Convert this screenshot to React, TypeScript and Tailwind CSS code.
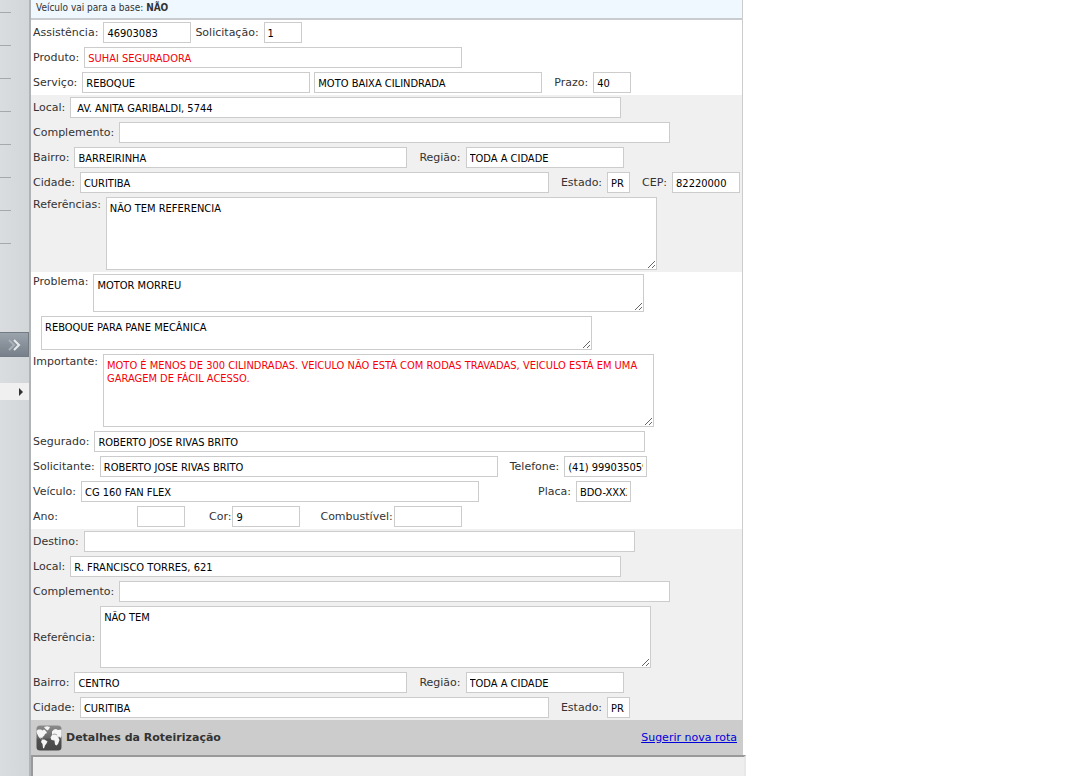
import { useId } from "react";
import type { ReactNode } from "react";
import clsx from "clsx";

const fieldStyle =
  "shrink-0 border border-[#cccccc] bg-white px-[3px] font-['DejaVu_Sans_Condensed','DejaVu_Sans',sans-serif] text-[11px] leading-[13px] outline-none focus:border-[#888888]";

type FieldProps = {
  label: string;
  value?: string;
  width: string;
  red?: boolean;
  className?: string;
  labelClass?: string;
};

const Field = ({ label, value = "", width, red, className = "gap-[5px]", labelClass }: FieldProps) => {
  const id = useId();
  return (
    <div className={clsx("flex items-center", className)}>
      <label htmlFor={id} className={clsx("shrink-0 pt-px", labelClass)}>{label}</label>
      <input
        id={id}
        type="text"
        defaultValue={value}
        className={clsx(fieldStyle, "h-[21px] pt-0.5", width, red ? "text-[#f50008]" : "text-black")}
      />
    </div>
  );
};

type AreaProps = {
  label?: string;
  name?: string;
  value: string;
  height: string;
  red?: boolean;
  center?: boolean;
};

const Area = ({ label, name, value, height, red, center }: AreaProps) => {
  const id = useId();
  return (
    <div className={clsx("flex gap-[5px] py-0.5", center ? "items-center" : "items-start", label ? "px-0.5" : "px-2.5")}>
      {label && <label htmlFor={id} className="shrink-0 pt-px">{label}</label>}
      <textarea
        id={id}
        aria-label={label ? undefined : name}
        defaultValue={value}
        className={clsx(fieldStyle, "block w-[551px] py-1", height, red ? "text-[#f50008]" : "text-black")}
      />
    </div>
  );
};

const Row = ({ children, className = "gap-3" }: { children: ReactNode; className?: string }) => (
  <div className={clsx("flex items-center px-0.5 py-0.5", className)}>{children}</div>
);

const GlobeIcon = () => (
  <svg width="26" height="26" viewBox="0 0 26 26" aria-hidden="true">
    <defs>
      <linearGradient id="globe" x1="0" y1="0" x2="0" y2="1">
        <stop offset="0" stopColor="#8c8c8c" />
        <stop offset="0.5" stopColor="#666666" />
        <stop offset="0.55" stopColor="#505050" />
        <stop offset="1" stopColor="#484848" />
      </linearGradient>
    </defs>
    <rect x="0.5" y="0.5" width="25" height="25" rx="3.5" fill="url(#globe)" />
    <g fill="#f4f4f4">
      <path d="M0.5 6 L2 4.5 L5 4.5 L6.5 5.5 L8 4.5 L10 6 L11 8 L9 9 L8 11 L6.5 12 L6.5 13.5 L5 12.5 L4 13 L6 14.5 L4.5 14 L2.5 11.5 L1 8.5Z" />
      <path d="M8 2 L11 1.2 L14 2 L13 4 L11.5 5.5 L9.5 4Z" />
      <path d="M6 14.5 L8.5 14.5 L11.5 16.5 L10.5 18.5 L9 20.5 L8 23.5 L7 23 L6.5 19 L5 17Z" />
      <path d="M16 8.5 L16 6.5 L18 4.5 L20 4 L22 5 L25.5 4.5 L25.5 11 L24.5 13 L23.5 11.5 L22.5 13 L23.5 15 L22 19 L20.5 20.5 L19 19.5 L18.5 15.5 L15.5 15 L14.5 12.5 L16 10Z" />
    </g>
    <path d="M16.5 9.5 L19 9 L21 10 M22 11.5 L23 13" fill="none" stroke="#8a8a8a" strokeWidth="0.8" />
  </svg>
);

const Sidebar = () => (
  <aside className="w-[31px] shrink-0 border-r-2 border-[#b1b4b7] bg-linear-to-r from-[#d9dddf] to-[#d2d6d9]">
    <div className="h-[13px] w-[11px] border-b border-[#a6a9ab]" />
    {[1, 2, 3, 4, 5, 6, 7].map((n) => (
      <div key={n} className="h-[33px] w-[11px] border-b border-[#a6a9ab]" />
    ))}
    <button
      type="button"
      aria-label="Expandir menu"
      className="mt-[88px] flex h-[25px] w-full items-center justify-end border border-l-0 border-[#737b84] bg-linear-to-b from-[#9ba3ab] to-[#77808a] pr-[7px]"
    >
      <svg width="14" height="12" viewBox="0 0 14 12" fill="none" strokeWidth="2">
        <path d="M2 1 L7 6 L2 11" stroke="#a9b0b7" />
        <path d="M7 1 L12 6 L7 11" stroke="#e8ebed" />
      </svg>
    </button>
    <button
      type="button"
      aria-label="Abrir"
      className="mt-[26px] flex h-[17px] w-full items-center justify-end bg-[#f0f0f0] pr-1.5"
    >
      <svg width="4" height="8" viewBox="0 0 4 8">
        <path d="M0 0 L4 4 L0 8Z" fill="#333333" />
      </svg>
    </button>
  </aside>
);

export default function App() {
  return (
    <div className="flex min-h-screen overflow-x-hidden bg-white font-['DejaVu_Sans',sans-serif] text-[11px] leading-[14px] text-[#333333]">
      <Sidebar />
      <main className="flex max-w-[712px] flex-1 flex-col border-r border-[#cccccc]">
        <div className="h-5 border-b-2 border-[#c8ccd0] bg-[#eff7ff] px-[5px] pt-px font-['DejaVu_Sans_Condensed','DejaVu_Sans',sans-serif] text-[10px]">
          Veículo vai para a base: <b>NÃO</b>
        </div>

        <section>
          <Row className="gap-1">
            <Field label="Assistência:" value="46903083" width="w-[88px]" />
            <Field label="Solicitação:" value="1" width="w-[38px]" />
          </Row>
          <Row>
            <Field label="Produto:" value="SUHAI SEGURADORA" width="w-[378px]" red />
          </Row>
          <Row>
            <div className="flex gap-1">
              <Field label="Serviço:" value="REBOQUE" width="w-[228px]" />
              <input
                type="text"
                aria-label="Tipo de serviço"
                defaultValue="MOTO BAIXA CILINDRADA"
                className={clsx(fieldStyle, "h-[21px] w-[228px] pt-0.5 text-black")}
              />
            </div>
            <Field label="Prazo:" value="40" width="w-[38px]" />
          </Row>
        </section>

        <section className="bg-[#f0f0f0]">
          <Row>
            <Field label="Local:" value=" AV. ANITA GARIBALDI, 5744" width="w-[551px]" />
          </Row>
          <Row>
            <Field label="Complemento:" width="w-[551px]" />
          </Row>
          <Row>
            <Field label="Bairro:" value="BARREIRINHA" width="w-[333px]" />
            <Field label="Região:" value="TODA A CIDADE" width="w-[158px]" />
          </Row>
          <Row>
            <Field label="Cidade:" value="CURITIBA" width="w-[469px]" />
            <Field label="Estado:" value="PR" width="w-[23px]" />
            <Field label="CEP:" value="82220000" width="w-[68px]" />
          </Row>
          <Area label="Referências:" value="NÃO TEM REFERENCIA" height="h-[73px]" />
        </section>

        <section>
          <Area label="Problema:" value="MOTOR MORREU" height="h-[38px]" />
          <Area name="Descrição do problema" value="REBOQUE PARA PANE MECÂNICA" height="h-[34px]" />
          <Area
            label="Importante:"
            value="MOTO É MENOS DE 300 CILINDRADAS. VEICULO NÃO ESTÁ COM RODAS TRAVADAS, VEICULO ESTÁ EM UMA GARAGEM DE FÁCIL ACESSO."
            height="h-[73px]"
            red
          />
          <Row>
            <Field label="Segurado:" value="ROBERTO JOSE RIVAS BRITO" width="w-[551px]" />
          </Row>
          <Row>
            <Field label="Solicitante:" value="ROBERTO JOSE RIVAS BRITO" width="w-[398px]" />
            <Field label="Telefone:" value="(41) 999035059" width="w-[83px]" />
          </Row>
          <Row className="gap-[59px]">
            <Field label="Veículo:" value="CG 160 FAN FLEX" width="w-[398px]" />
            <Field label="Placa:" value="BDO-XXXX" width="w-[55px]" />
          </Row>
          <Row className="gap-5">
            <Field label="Ano:" width="w-[48px]" className="gap-1" labelClass="w-[100px]" />
            <Field label="Cor:" value="9" width="w-[68px]" className="gap-px pl-1" />
            <Field label="Combustível:" width="w-[68px]" className="gap-px" />
          </Row>
        </section>

        <section className="bg-[#f0f0f0]">
          <Row>
            <Field label="Destino:" width="w-[551px]" />
          </Row>
          <Row>
            <Field label="Local:" value="R. FRANCISCO TORRES, 621" width="w-[551px]" />
          </Row>
          <Row>
            <Field label="Complemento:" width="w-[551px]" />
          </Row>
          <Area label="Referência:" value="NÃO TEM" height="h-[62px]" center />
          <Row>
            <Field label="Bairro:" value="CENTRO" width="w-[333px]" />
            <Field label="Região:" value="TODA A CIDADE" width="w-[158px]" />
          </Row>
          <Row>
            <Field label="Cidade:" value="CURITIBA" width="w-[469px]" />
            <Field label="Estado:" value="PR" width="w-[23px]" />
          </Row>
        </section>

        <div className="flex h-[35px] items-center gap-1 bg-[#cccccc] px-[5px]">
          <GlobeIcon />
          <h2 className="pt-px font-bold">Detalhes da Roteirização</h2>
          <a href="#rota" className="ml-auto pt-px text-[#0000dd] underline">Sugerir nova rota</a>
        </div>
        {/* moldura do mapa, um pouco mais larga que o painel */}
        <div className="-mr-1 min-h-[21px] flex-1 border-t-2 border-r-2 border-l-2 border-t-[#999999] border-r-[#e8e8e8] border-l-[#999999] bg-[#eeeeee]" />
      </main>
    </div>
  );
}
